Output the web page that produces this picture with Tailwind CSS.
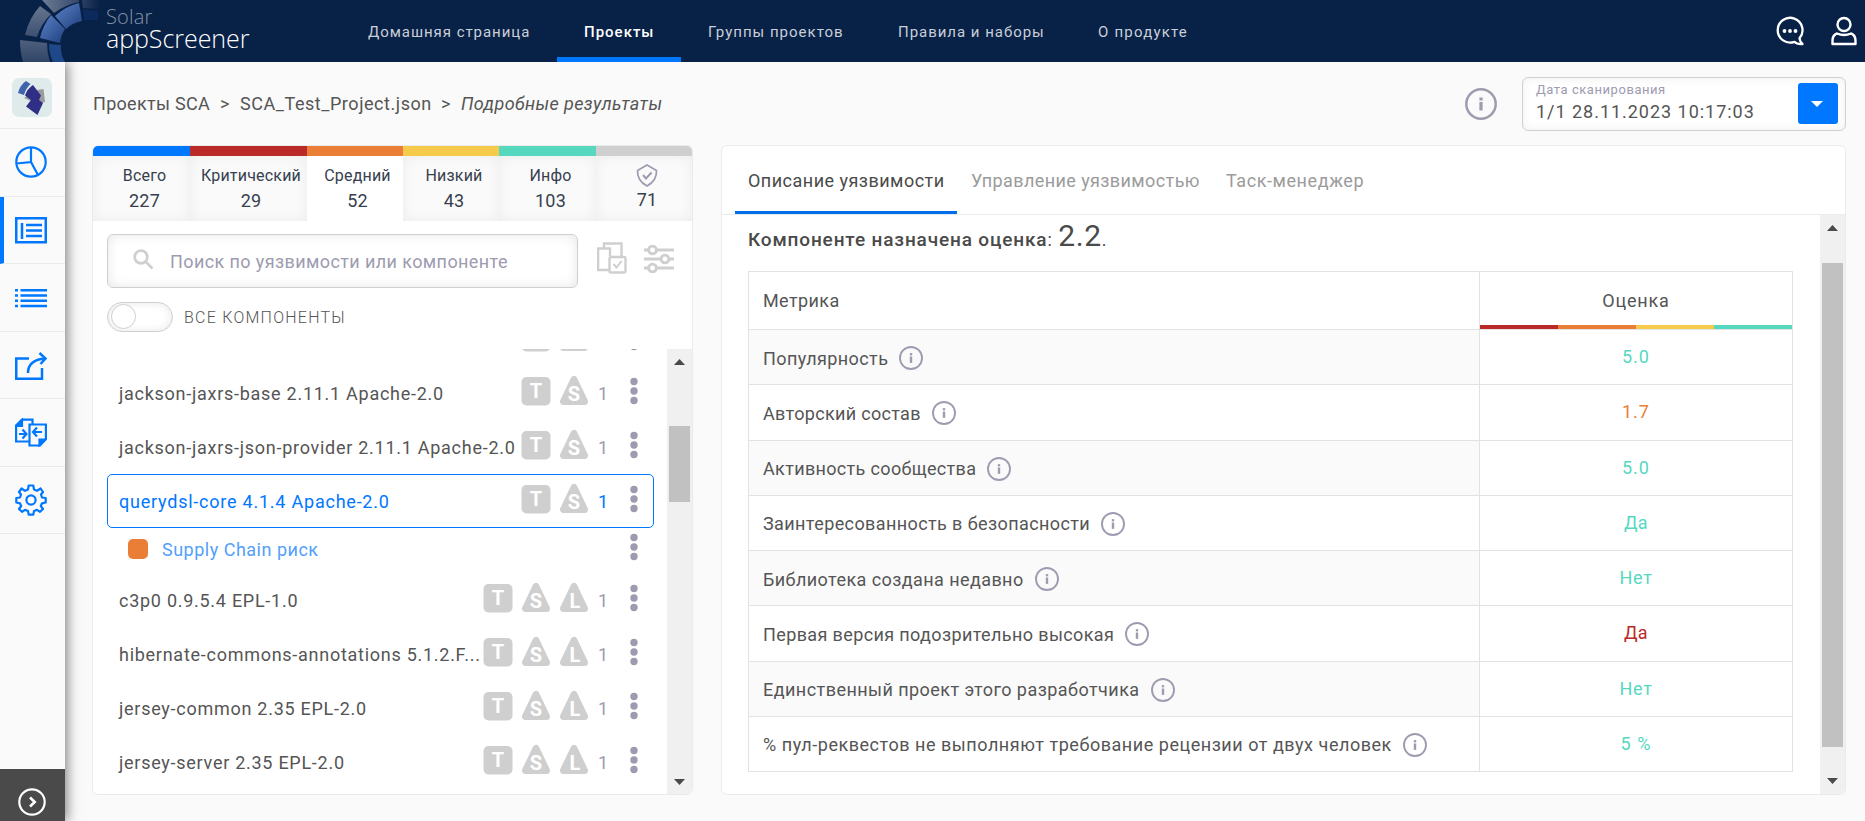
<!DOCTYPE html>
<html lang="ru">
    <head>
        <meta charset="UTF-8">
        <meta name="viewport" content="width=device-width, initial-scale=1.0">
        <title>Solar appScreener</title>
        <script src="https://cdn.jsdelivr.net/npm/@tailwindcss/browser@4"></script>
    </head>
    <body class="bg-[#fafafa] w-[1865px] h-[821px] overflow-hidden flex flex-col font-['Roboto',sans-serif] text-[#555] text-lg">

        <!-- Icon sprites -->
        <svg class="hidden">
            <symbol id="badge-t" viewBox="0 0 30 32">
                <rect x="0.5" y="2" width="29" height="28.500" rx="5" fill="#cfcfcf"/>
                <text x="15" y="22.500" text-anchor="middle" font-size="20" font-weight="700" font-family="Roboto" letter-spacing="0" fill="#fff">T</text>
            </symbol>
            <symbol id="badge-s" viewBox="0 0 30 32">
                <path d="M15 4.500 4.500 26.500h21z" fill="#cfcfcf" stroke="#cfcfcf" stroke-width="7" stroke-linejoin="round"/>
                <text x="15" y="25.500" text-anchor="middle" font-size="20" font-weight="700" font-family="Roboto" letter-spacing="0" fill="#fff">S</text>
            </symbol>
            <symbol id="badge-l" viewBox="0 0 30 32">
                <path d="M15 4.500 4.500 26.500h21z" fill="#cfcfcf" stroke="#cfcfcf" stroke-width="7" stroke-linejoin="round"/>
                <text x="16" y="25.500" text-anchor="middle" font-size="20" font-weight="700" font-family="Roboto" letter-spacing="0" fill="#fff">L</text>
            </symbol>
            <symbol id="dots" viewBox="0 0 8 28">
                <circle cx="4" cy="4.500" r="3.700" fill="#9d9baf"/><circle cx="4" cy="14" r="3.700" fill="#9d9baf"/><circle cx="4" cy="23.500" r="3.700" fill="#9d9baf"/>
            </symbol>
            <symbol id="info" viewBox="0 0 32 32">
                <circle cx="16" cy="16" r="14.700" fill="none" stroke="#9d9baf" stroke-width="2.500"/>
                <rect x="14.400" y="9.500" width="3.200" height="3" fill="#9d9baf"/><rect x="14.400" y="14" width="3.200" height="8.500" fill="#9d9baf"/>
            </symbol>
        </svg>

        <!-- Header -->
        <header class="h-[62px] shrink-0 bg-[#082147] flex">
            <div class="w-[341px] flex">
                <svg class="w-[106px] h-[62px] shrink-0" viewBox="0 0 106 62">
                    <defs>
                        <linearGradient id="lg1" x1="0" y1="0" x2="1" y2="0"><stop offset="0" stop-color="#6d7c95"/><stop offset="1" stop-color="#33476a"/></linearGradient>
                        <linearGradient id="lg2" x1="0" y1="0" x2="0" y2="1"><stop offset="0" stop-color="#66758f"/><stop offset="1" stop-color="#3d5072"/></linearGradient>
                        <linearGradient id="lg3" x1="0" y1="0" x2="1" y2="1"><stop offset="0" stop-color="#5b82c6"/><stop offset="1" stop-color="#1f4080"/></linearGradient>
                        <linearGradient id="lg4" x1="0" y1="0" x2="1" y2="0"><stop offset="0" stop-color="#2c4064"/><stop offset="1" stop-color="#082147"/></linearGradient>
                    </defs>
                    <path d="M42 0H79V2Q65 5 54 13z" fill="url(#lg1)"/>
                    <path d="M82 0H100V9L83 8z" fill="url(#lg4)"/>
                    <path d="M40 6 51 14Q41 24 37 37L25 35Q29 18 40 6z" fill="url(#lg2)"/>
                    <path d="M20 40 47 43Q47 53 50 62H23Q20 52 20 40z" fill="url(#lg2)" opacity=".75"/>
                    <path d="M55 16Q66 6 79 3L82 21Q72 23 66 29z" fill="url(#lg3)"/>
                    <path d="M51 15 65 29Q61 35 60 43L40 38Q43 25 51 15z" fill="url(#lg3)"/>
                    <path d="M49 44 61 45Q60 54 65 62H53Q49 54 49 44z" fill="#1f4888"/>
                    <path d="M83 9 98 11V20H84z" fill="#0d2a5c"/>
                </svg>
                <div class="flex flex-col font-['Open_Sans'] font-light">
                    <span class="text-[20px] leading-[20px] mt-[7px] text-[#8492a8] tracking-[0.2px]">Solar</span>
                    <span class="text-[25px] leading-[22px] text-white tracking-[-0.05px]">appScreener</span>
                </div>
            </div>
            <nav class="flex text-[15px] text-[#c9cfd8] leading-[64px] whitespace-nowrap">
                <a class="w-[216px] pl-[27px] tracking-[0.95px]">Домашняя страница</a>
                <a class="w-[124px] pl-[27px] tracking-[1px] text-white font-medium border-b-[5px] border-[#0077ff]">Проекты</a>
                <a class="w-[190px] pl-[27px] tracking-[1px]">Группы проектов</a>
                <a class="w-[200px] pl-[27px] tracking-[0.97px]">Правила и наборы</a>
                <a class="w-[144px] pl-[27px] tracking-[1.2px]">О продукте</a>
            </nav>
            <div class="flex items-center gap-[26px] ml-auto pr-2">
                <svg class="w-[30px] h-[30px]" viewBox="0 0 30 30" fill="none" stroke="#fff" stroke-width="2.300" stroke-linejoin="round">
                    <path d="M24.500 22.300A12.400 12.400 0 1 0 19.500 25.800Q22 28.500 27.500 28 25 26 24.500 22.300z"/>
                    <g fill="#fff" stroke="none"><circle cx="9.500" cy="15" r="1.900"/><circle cx="15" cy="15" r="1.900"/><circle cx="20.500" cy="15" r="1.900"/></g>
                </svg>
                <svg class="w-[26px] h-[30px]" viewBox="0 0 26 30" fill="none" stroke="#fff" stroke-width="2.400" stroke-linejoin="round">
                    <circle cx="13" cy="8.500" r="6.500"/>
                    <path d="M6 17.500Q13 20.500 20 17.500 24.500 19 24.500 25V28H1.500V25Q1.500 19 6 17.500z"/>
                </svg>
            </div>
        </header>

        <div class="flex flex-1 min-h-0">
            <!-- Sidebar -->
            <aside class="w-[65px] shrink-0 bg-[#fafafa] shadow-[2px_0_12px_rgba(0,0,0,0.5)] flex flex-col [clip-path:inset(0_-20px_0_0)]">
                <div class="h-[67px] border-b border-[#ebebeb] pl-3 pt-4">
                    <svg class="w-10 h-10" viewBox="0 0 40 40">
                        <rect width="40" height="39" rx="7" fill="#dfebea"/>
                        <path d="M25 12 31.500 11 33 24 26 26 12 20 15 18z" fill="#9a9a9e"/>
                        <path d="M14 3 18.500 6Q14 10 12 17L6 15Q8 7 14 3z" fill="#3f63ae"/>
                        <path d="M21 7 29 17.500 27 22 31 25 25.500 37 14 28.500 19 22 13 17.500Q15 11 21 7z" fill="#2f2f85"/>
                    </svg>
                </div>
                <div class="h-[68px] border-b border-[#ebebeb] pl-[15px] pt-[17px]">
                    <svg class="w-8 h-8" viewBox="0 0 32 32" fill="none" stroke="#0077ff" stroke-width="2.200"><circle cx="16" cy="16" r="14.700"/><path d="M16 1V16L1.500 17.500M16 16 23 29"/></svg>
                </div>
                <div class="h-[67px] border-b border-[#ebebeb] border-l-4 border-l-[#0077ff] pl-[11px] pt-[19px]">
                    <svg class="w-8 h-[28px]" viewBox="0 0 32 28" fill="none" stroke="#0077ff" stroke-width="2.500"><path d="M1.250 2.250H30.750V26.250H1.250zM7 7V23M11 9H27M11 14.500H27M11 20H27"/></svg>
                </div>
                <div class="h-[68px] border-b border-[#ebebeb] pl-[15px] pt-[24px]">
                    <svg class="w-8 h-[20px]" viewBox="0 0 32 20" fill="none" stroke="#0077ff" stroke-width="2.400"><path d="M0 2.200H3M5.500 2.200H32M0 7.500H3M5.500 7.500H32M0 12.800H3M5.500 12.800H32M0 18H3M5.500 18H32"/></svg>
                </div>
                <div class="h-[67px] border-b border-[#ebebeb] pl-[15px] pt-[20px]">
                    <svg class="w-[33px] h-[29px]" viewBox="0 0 33 29" fill="none" stroke="#0077ff" stroke-width="2.500"><path d="M14 6.500H1.250V26.750H27V16M13 21Q13 8 30 6.500M24.500 1 30.500 6.500 25.500 12"/></svg>
                </div>
                <div class="h-[68px] border-b border-[#ebebeb] pl-[15px] pt-[19px]">
                    <svg class="w-8 h-[30px]" viewBox="0 0 32 30" fill="none" stroke="#0077ff" stroke-width="2.200"><path d="M14 23.500H1.100V7.500L7 1.600H17.500V6M14.500 6.500H30.900V21L25 27.500H14.500zM4 16H11M7.500 11.500 11.500 16 7.500 20.500M27 14H18.500M22 9.500 18 14 22 18.500"/><path d="M1.500 8H7V2zM30.500 21.500H24.500V27z" fill="#0077ff"/></svg>
                </div>
                <div class="h-[67px] border-b border-[#ebebeb] pl-[15px] pt-[17px]">
                    <svg class="w-8 h-8" viewBox="0 0 32 32" fill="none" stroke="#0077ff" stroke-width="2.200" stroke-linejoin="round"><circle cx="16" cy="16" r="4.600"/><path d="M13.700 1.500H18.300L19 5.500 22 6.800 25.600 4.500 28 8 26 10.500 27 13.500 30.700 14V18.500L27 19.300 25.800 22 28 25 25 27.800 22 25.800 19 27 18.300 30.600H13.700L13 27 10 25.800 7 27.800 4 25 6.200 22 5 19.300 1.300 18.500V14L5 13.500 6 10.500 4 8 6.600 4.500 10 6.800 13 5.500z"/></svg>
                </div>
                <div class="mt-auto h-[52px] bg-[#4a4a4a] pl-[18px] pt-[19px]">
                    <svg class="w-7 h-7" viewBox="0 0 28 28" fill="none" stroke="#fff" stroke-width="2.200"><circle cx="14" cy="14" r="12.700"/><path d="M12 9.500 16.700 14 12 18.500" stroke-width="2.600"/></svg>
                </div>
            </aside>

            <main class="flex-1 pl-[27px] pr-[19px] flex flex-col">
                <!-- Breadcrumbs and scan date -->
                <div class="flex h-[83px] pt-[15px]">
                    <div class="flex pt-[13px] leading-7 whitespace-nowrap">
                        <span class="w-[128px] pl-px tracking-[0.3px]">Проекты SCA</span>
                        <span class="w-[20px]">&gt;</span>
                        <span class="w-[201px] tracking-[0.55px]">SCA_Test_Project.json</span>
                        <span class="w-[20px]">&gt;</span>
                        <span class="italic tracking-[0.4px]">Подробные результаты</span>
                    </div>
                    <svg class="w-8 h-8 ml-auto mt-[11px] mr-[25px]"><use href="#info"/></svg>
                    <div class="w-[324px] h-[54px] border border-[#cfcfcf] rounded-md bg-white shadow-[inset_0_0_10px_rgba(0,0,0,0.07)] flex justify-between pl-[13px] pr-[7px]">
                        <div>
                            <div class="text-[13px] leading-[22px] mt-px text-[#9d9baf] tracking-[0.55px]">Дата сканирования</div>
                            <div class="leading-[22px] tracking-[0.97px]">1/1 28.11.2023 10:17:03</div>
                        </div>
                        <div class="w-10 h-[41px] mt-[5px] bg-[#0077ff] rounded-[3px] flex items-center justify-center">
                            <svg class="w-3 h-[6px] mr-[2px]" viewBox="0 0 12 6"><path d="M0 0H12L6 6z" fill="#fff"/></svg>
                        </div>
                    </div>
                </div>

                <div class="flex gap-7 h-[650px]">
                    <!-- Vulnerability list -->
                    <section class="w-[601px] shrink-0 bg-white border border-[#ebebeb] rounded-md overflow-hidden flex flex-col">
                        <div class="flex h-[75px] shrink-0 text-center text-base text-[#36404f] leading-6 tracking-[0.2px]">
                            <div class="w-[97px] border-t-10 border-[#0077ff] bg-[#fafafa]"><div class="h-[65px] pt-2 pl-[6px] shadow-[inset_0_0_14px_rgba(0,0,0,0.06)]">Всего<div class="text-lg leading-[26px]">227</div></div></div>
                            <div class="w-[117px] border-t-10 border-[#ba2a28] bg-[#fafafa]"><div class="h-[65px] pt-2 pl-[5px] shadow-[inset_0_0_14px_rgba(0,0,0,0.06)]">Критический<div class="text-lg leading-[26px]">29</div></div></div>
                            <div class="w-[96px] border-t-10 border-[#ea7e37] pt-2 pl-[5px]">Средний<div class="text-lg leading-[26px]">52</div></div>
                            <div class="w-[96px] border-t-10 border-[#f6cb4c] bg-[#fafafa]"><div class="h-[65px] pt-2 pl-[6px] shadow-[inset_0_0_14px_rgba(0,0,0,0.06)]">Низкий<div class="text-lg leading-[26px]">43</div></div></div>
                            <div class="w-[97px] border-t-10 border-[#56d8bf] bg-[#fafafa]"><div class="h-[65px] pt-2 pl-[6px] shadow-[inset_0_0_14px_rgba(0,0,0,0.06)]">Инфо<div class="text-lg leading-[26px]">103</div></div></div>
                            <div class="flex-1 border-t-10 border-[#cfcfcf] bg-[#fafafa]">
                                <div class="h-[65px] pt-2 pl-[6px] flex flex-col items-center shadow-[inset_0_0_14px_rgba(0,0,0,0.06)]">
                                    <svg class="w-[22px] h-[23px]" viewBox="0 0 22 23" fill="none" stroke="#9d9baf" stroke-width="1.700"><path d="M11 1 20.500 6.500Q21 16.500 11 22 1 16.500 1.500 6.500z"/><path d="M7 11 10 14.500 15.500 8.500" stroke-width="2"/></svg>
                                    <div class="text-lg leading-[26px]">71</div>
                                </div>
                            </div>
                        </div>
                        <div class="flex pl-[14px] pt-[13px]">
                            <div class="w-[471px] h-[54px] border border-[#cfcfcf] rounded-md shadow-[inset_0_0_12px_rgba(0,0,0,0.1)] flex items-center text-[#9d9baf]">
                                <svg class="w-[21px] h-[21px] ml-[25px] -mt-1" viewBox="0 0 21 21" fill="none" stroke="#cfcfcf" stroke-width="2.700"><circle cx="8" cy="8" r="6.300"/><path d="M12.500 12.500 19.500 19.500"/></svg>
                                <span class="ml-4 mt-[2px] tracking-[0.4px]">Поиск по уязвимости или компоненте</span>
                            </div>
                            <svg class="w-[30px] h-[32px] ml-[19px] mt-[8px]" viewBox="0 0 30 32" fill="none" stroke="#cfcfcf" stroke-width="2.400"><path d="M7 6V1.500H24.500V14M12 28H1.100V6.500H13V14"/><rect x="12.500" y="15" width="16" height="15.500" rx="1.500"/><path d="M16.500 22 19.500 25.500 24.500 19" stroke-width="2"/></svg>
                            <svg class="w-[32px] h-[28px] ml-[16px] mt-[11px]" viewBox="0 0 32 28" fill="none" stroke="#cfcfcf" stroke-width="2.900"><path d="M1 5H5.500M13.500 5H31M1 14H18M26 14H31M1 23H5.500M13.500 23H31"/><circle cx="9.500" cy="5" r="3.900"/><circle cx="22" cy="14" r="3.900"/><circle cx="9.500" cy="23" r="3.900"/></svg>
                        </div>
                        <div class="flex items-center pl-[14px] mt-[14px]">
                            <div class="w-[66px] h-[30px] rounded-full border border-[#cfcfcf] shadow-[inset_0_0_8px_rgba(0,0,0,0.1)] pl-[3px] pt-px"><div class="w-[25px] h-[25px] rounded-full border border-[#cfcfcf] bg-white"></div></div>
                            <span class="ml-[11px] mt-[2px] text-base font-light tracking-[1.25px]">ВСЕ КОМПОНЕНТЫ</span>
                        </div>
                        <div class="flex mt-[17px] flex-1 min-h-0">
                            <div class="flex-1 overflow-hidden pl-[14px] pr-[13px] tracking-[0.73px]">
                                <div class="h-[54px] -mt-[37px] flex items-start pl-[12px]">
                                    <span class="flex-1"></span>
                                    <svg class="w-[30px] h-8 mt-[9px]"><use href="#badge-t"/></svg>
                                    <svg class="w-[30px] h-8 mt-[9px] ml-[8px]"><use href="#badge-s"/></svg>
                                    <svg class="w-2 h-7 mt-[11px] ml-[41px] mr-[16px]"><use href="#dots"/></svg>
                                </div>
                                <div class="h-[54px] flex items-start pl-[12px] whitespace-nowrap leading-[56px]">
                                    <span class="flex-1">jackson-jaxrs-base 2.11.1 Apache-2.0</span>
                                    <svg class="w-[30px] h-8 mt-[9px]"><use href="#badge-t"/></svg>
                                    <svg class="w-[30px] h-8 mt-[9px] ml-[8px]"><use href="#badge-s"/></svg>
                                    <span class="w-[41px] pl-[9px] text-[#9d9baf]">1</span>
                                    <svg class="w-2 h-7 mt-[11px] mr-[16px]"><use href="#dots"/></svg>
                                </div>
                                <div class="h-[54px] flex items-start pl-[12px] whitespace-nowrap leading-[56px]">
                                    <span class="flex-1">jackson-jaxrs-json-provider 2.11.1 Apache-2.0</span>
                                    <svg class="w-[30px] h-8 mt-[9px]"><use href="#badge-t"/></svg>
                                    <svg class="w-[30px] h-8 mt-[9px] ml-[8px]"><use href="#badge-s"/></svg>
                                    <span class="w-[41px] pl-[9px] text-[#9d9baf]">1</span>
                                    <svg class="w-2 h-7 mt-[11px] mr-[16px]"><use href="#dots"/></svg>
                                </div>
                                <div class="h-[54px] flex items-start pl-[11px] whitespace-nowrap leading-[54px] border border-[#0077ff] rounded-[5px] text-[#0077ff]">
                                    <span class="flex-1 tracking-[0.77px]">querydsl-core 4.1.4 Apache-2.0</span>
                                    <svg class="w-[30px] h-8 mt-[8px]"><use href="#badge-t"/></svg>
                                    <svg class="w-[30px] h-8 mt-[8px] ml-[8px]"><use href="#badge-s"/></svg>
                                    <span class="w-[41px] pl-[9px]">1</span>
                                    <svg class="w-2 h-7 mt-[10px] mr-[15px]"><use href="#dots"/></svg>
                                </div>
                                <div class="h-[45px] flex items-start pl-[21px] leading-[43px] text-[#529ffa]">
                                    <div class="w-5 h-5 mt-[11px] rounded-[5px] bg-[#ea7e37]"></div>
                                    <span class="flex-1 pl-[14px] tracking-[0.5px]">Supply Chain риск</span>
                                    <svg class="w-2 h-7 mt-[5px] mr-[16px]"><use href="#dots"/></svg>
                                </div>
                                <div class="h-[54px] flex items-start pl-[12px] whitespace-nowrap leading-[56px]">
                                    <span class="flex-1">c3p0 0.9.5.4 EPL-1.0</span>
                                    <svg class="w-[30px] h-8 mt-[9px]"><use href="#badge-t"/></svg>
                                    <svg class="w-[30px] h-8 mt-[9px] ml-[8px]"><use href="#badge-s"/></svg>
                                    <svg class="w-[30px] h-8 mt-[9px] ml-[8px]"><use href="#badge-l"/></svg>
                                    <span class="w-[41px] pl-[9px] text-[#9d9baf]">1</span>
                                    <svg class="w-2 h-7 mt-[11px] mr-[16px]"><use href="#dots"/></svg>
                                </div>
                                <div class="h-[54px] flex items-start pl-[12px] whitespace-nowrap leading-[56px]">
                                    <span class="flex-1">hibernate-commons-annotations 5.1.2.F...</span>
                                    <svg class="w-[30px] h-8 mt-[9px]"><use href="#badge-t"/></svg>
                                    <svg class="w-[30px] h-8 mt-[9px] ml-[8px]"><use href="#badge-s"/></svg>
                                    <svg class="w-[30px] h-8 mt-[9px] ml-[8px]"><use href="#badge-l"/></svg>
                                    <span class="w-[41px] pl-[9px] text-[#9d9baf]">1</span>
                                    <svg class="w-2 h-7 mt-[11px] mr-[16px]"><use href="#dots"/></svg>
                                </div>
                                <div class="h-[54px] flex items-start pl-[12px] whitespace-nowrap leading-[56px]">
                                    <span class="flex-1">jersey-common 2.35 EPL-2.0</span>
                                    <svg class="w-[30px] h-8 mt-[9px]"><use href="#badge-t"/></svg>
                                    <svg class="w-[30px] h-8 mt-[9px] ml-[8px]"><use href="#badge-s"/></svg>
                                    <svg class="w-[30px] h-8 mt-[9px] ml-[8px]"><use href="#badge-l"/></svg>
                                    <span class="w-[41px] pl-[9px] text-[#9d9baf]">1</span>
                                    <svg class="w-2 h-7 mt-[11px] mr-[16px]"><use href="#dots"/></svg>
                                </div>
                                <div class="h-[54px] flex items-start pl-[12px] whitespace-nowrap leading-[56px]">
                                    <span class="flex-1">jersey-server 2.35 EPL-2.0</span>
                                    <svg class="w-[30px] h-8 mt-[9px]"><use href="#badge-t"/></svg>
                                    <svg class="w-[30px] h-8 mt-[9px] ml-[8px]"><use href="#badge-s"/></svg>
                                    <svg class="w-[30px] h-8 mt-[9px] ml-[8px]"><use href="#badge-l"/></svg>
                                    <span class="w-[41px] pl-[9px] text-[#9d9baf]">1</span>
                                    <svg class="w-2 h-7 mt-[11px] mr-[16px]"><use href="#dots"/></svg>
                                </div>
                            </div>
                            <div class="w-[25px] bg-[#f0f0f0] flex flex-col items-center pt-[10px] pb-[9px]">
                                <svg class="w-[11px] h-[6px]" viewBox="0 0 11 6"><path d="M5.500 0 11 6H0z" fill="#4a4a4a"/></svg>
                                <div class="w-[21px] h-[76px] mt-[61px] bg-[#c1c1c1]"></div>
                                <svg class="w-[11px] h-[6px] mt-auto" viewBox="0 0 11 6"><path d="M5.500 6 11 0H0z" fill="#4a4a4a"/></svg>
                            </div>
                        </div>
                    </section>

                    <!-- Vulnerability details -->
                    <section class="flex-1 bg-white border border-[#ebebeb] rounded-md overflow-hidden flex flex-col">
                        <div class="h-[69px] shrink-0 border-b border-[#ebebeb] pl-[13px] flex leading-[69px] text-[#9b9b9b] whitespace-nowrap">
                            <a class="w-[222px] pl-[13px] text-[#4a4a4a] border-b-3 border-[#006eeb] tracking-[0.48px]">Описание уязвимости</a>
                            <a class="w-[255px] pl-[14px] tracking-[0.4px]">Управление уязвимостью</a>
                            <a class="pl-[14px] tracking-[0.58px]">Таск-менеджер</a>
                        </div>
                        <div class="flex flex-1 min-h-0">
                            <div class="flex-1 pl-[26px]">
                                <div class="h-[56px] flex items-baseline whitespace-pre leading-[42px] text-[#4a4a4a]"><b class="font-medium text-[19px] tracking-[0.85px]">Компоненте назначена оценка</b>: <span class="text-[30px] tracking-[0.6px] ml-[2px]">2.2</span>.</div>
                                <table class="w-[1045px] border-collapse table-fixed whitespace-nowrap tracking-[0.4px]">
                                    <tr class="h-[58px]">
                                        <td class="border border-[#e2e2e2] pl-[14px] w-[731px]">Метрика</td>
                                        <td class="border border-[#e2e2e2] p-0">
                                            <div class="h-[57px] flex flex-col text-center"><div class="leading-[58px] h-[53px] tracking-[0.8px]">Оценка</div>
                                                <div class="grid grid-cols-4 h-1"><i class="bg-[#ba2a28]"></i><i class="bg-[#ea7e37]"></i><i class="bg-[#f6cb4c]"></i><i class="bg-[#56d8bf]"></i></div>
                                            </div>
                                        </td>
                                    </tr>
                                    <tr class="h-[55.25px]">
                                        <td class="border border-[#e2e2e2] pl-[14px] bg-[#fafafa]"><div class="flex items-center gap-[11px] pt-[2px]"><span class="pt-px tracking-[0.4px]">Популярность</span><svg class="w-6 h-6"><use href="#info"/></svg></div></td>
                                        <td class="border border-[#e2e2e2] text-center text-[#56d8bf] tracking-[1px]">5.0</td>
                                    </tr>
                                    <tr class="h-[55.25px]">
                                        <td class="border border-[#e2e2e2] pl-[14px]"><div class="flex items-center gap-[11px] pt-[2px]"><span class="pt-px tracking-[0.32px]">Авторский состав</span><svg class="w-6 h-6"><use href="#info"/></svg></div></td>
                                        <td class="border border-[#e2e2e2] text-center text-[#ea7e37] tracking-[1px]">1.7</td>
                                    </tr>
                                    <tr class="h-[55.25px]">
                                        <td class="border border-[#e2e2e2] pl-[14px] bg-[#fafafa]"><div class="flex items-center gap-[11px] pt-[2px]"><span class="pt-px tracking-[0.34px]">Активность сообщества</span><svg class="w-6 h-6"><use href="#info"/></svg></div></td>
                                        <td class="border border-[#e2e2e2] text-center text-[#56d8bf] tracking-[1px]">5.0</td>
                                    </tr>
                                    <tr class="h-[55.25px]">
                                        <td class="border border-[#e2e2e2] pl-[14px]"><div class="flex items-center gap-[11px] pt-[2px]"><span class="pt-px">Заинтересованность в безопасности</span><svg class="w-6 h-6"><use href="#info"/></svg></div></td>
                                        <td class="border border-[#e2e2e2] text-center text-[#56d8bf]">Да</td>
                                    </tr>
                                    <tr class="h-[55.25px]">
                                        <td class="border border-[#e2e2e2] pl-[14px] bg-[#fafafa]"><div class="flex items-center gap-[11px] pt-[2px]"><span class="pt-px tracking-[0.42px]">Библиотека создана недавно</span><svg class="w-6 h-6"><use href="#info"/></svg></div></td>
                                        <td class="border border-[#e2e2e2] text-center text-[#56d8bf] tracking-[0.7px]">Нет</td>
                                    </tr>
                                    <tr class="h-[55.25px]">
                                        <td class="border border-[#e2e2e2] pl-[14px]"><div class="flex items-center gap-[11px] pt-[2px]"><span class="pt-px tracking-[0.38px]">Первая версия подозрительно высокая</span><svg class="w-6 h-6"><use href="#info"/></svg></div></td>
                                        <td class="border border-[#e2e2e2] text-center text-[#ba2a28]">Да</td>
                                    </tr>
                                    <tr class="h-[55.25px]">
                                        <td class="border border-[#e2e2e2] pl-[14px] bg-[#fafafa]"><div class="flex items-center gap-[11px] pt-[2px]"><span class="pt-px tracking-[0.45px]">Единственный проект этого разработчика</span><svg class="w-6 h-6"><use href="#info"/></svg></div></td>
                                        <td class="border border-[#e2e2e2] text-center text-[#56d8bf] tracking-[0.7px]">Нет</td>
                                    </tr>
                                    <tr class="h-[55.25px]">
                                        <td class="border border-[#e2e2e2] pl-[14px]"><div class="flex items-center gap-[11px] pt-[2px]"><span class="pt-px tracking-[0.53px]">% пул-реквестов не выполняют требование рецензии от двух человек</span><svg class="w-6 h-6"><use href="#info"/></svg></div></td>
                                        <td class="border border-[#e2e2e2] text-center text-[#56d8bf] tracking-[1px]">5 %</td>
                                    </tr>
                                </table>
                            </div>
                            <div class="w-[25px] bg-[#f0f0f0] flex flex-col items-center pt-[10px] pb-[10px]">
                                <svg class="w-[11px] h-[6px]" viewBox="0 0 11 6"><path d="M5.500 0 11 6H0z" fill="#4a4a4a"/></svg>
                                <div class="w-[21px] h-[484px] mt-[32px] bg-[#c1c1c1]"></div>
                                <svg class="w-[11px] h-[6px] mt-auto" viewBox="0 0 11 6"><path d="M5.500 6 11 0H0z" fill="#4a4a4a"/></svg>
                            </div>
                        </div>
                    </section>
                </div>
            </main>
        </div>
    </body>
</html>
